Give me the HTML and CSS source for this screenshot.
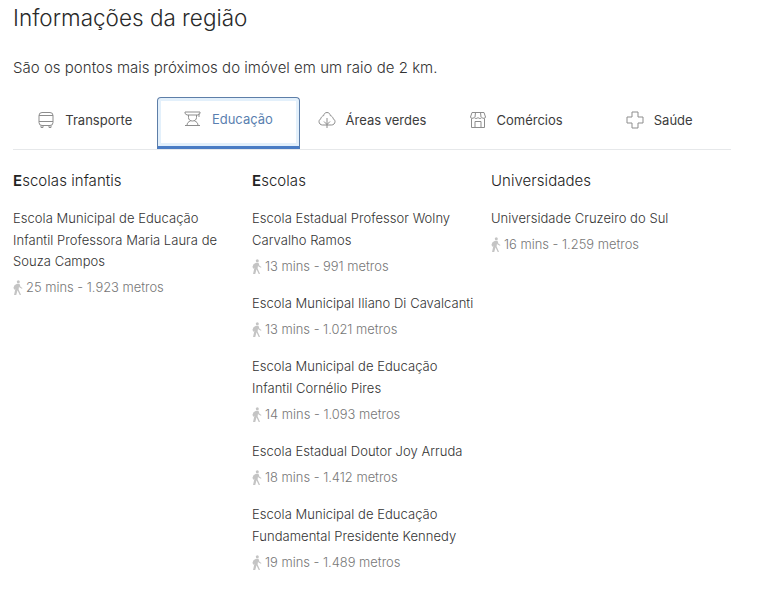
FILE: index.html
```html
<!DOCTYPE html>
<html lang="pt-BR">
<head>
<meta charset="utf-8">
<title>Informações da região</title>
<link rel="stylesheet" href="styles.css">
</head>
<body>
<main class="page">
  <h1 class="title">Informações da região</h1>
  <p class="lead">São os pontos mais próximos do imóvel em um raio de 2 km.</p>
  <nav class="tabs">
    <a class="tab"><svg class="tab-icon" viewBox="0 0 18 18"><rect x="2" y="1.500" width="14" height="13" rx="3"/><path d="M2 4.500h14M2 10.500h14M4 14.500v2h2v-2M12 14.500v2h2v-2"/></svg>Transporte</a>
    <a class="tab tab-active"><svg class="tab-icon" viewBox="0 0 18 18"><path d="M1 2h15v1.500L14 5H3L1 3.500zM4.500 5v2.500C4.500 9.800 6.300 11 8.500 11s4-1.200 4-3.500V5M15 3.500v3.500M6.500 11C4.500 11.500 3 13 3 15.500M10.500 11c2 .5 3.500 2 3.500 4.500M1 15.500h15"/></svg>Educação</a>
    <a class="tab"><svg class="tab-icon" viewBox="0 0 18 18"><path d="M9 1.500c-2 0-3.200 1.500-3.200 3C4 5 3 6.500 3 7.500 1.500 8.500 1 9.500 1 10.500c0 2 1.500 3.500 3.500 3.500h9c2 0 3.500-1.500 3.500-3.500 0-1-.5-2-2-3 0-1-1-2.500-2.800-3 0-1.500-1.200-3-3.200-3zM9 7v10M6 10.500L9 13.500M12 10.500L9 13.500"/></svg>Áreas verdes</a>
    <a class="tab"><svg class="tab-icon" viewBox="0 0 18 18"><path d="M3 1.500h12l1.500 4.500c0 1.500-2.500 1.800-3.700.5-1 1.300-2.800 1.300-3.800 0-1 1.300-2.800 1.300-3.800 0C4 7.800 1.500 7.500 1.500 6zM2.500 7.500v9h13v-9M6 16.500v-6h6v6M6.500 1.500L6 6M11.500 1.500L12 6"/></svg>Comércios</a>
    <a class="tab"><svg class="tab-icon" viewBox="0 0 18 18"><path d="M6 1h6v5h5v6h-5v5H6v-5H1V6h5z"/></svg>Saúde</a>
  </nav>
  <section class="columns">
    <div class="column">
      <h2 class="column-title"><b class="initial">E</b>scolas infantis</h2>
      <ul class="places">
        <li class="place"><span class="place-name">Escola Municipal de Educação Infantil Professora Maria Laura de Souza Campos</span><span class="place-meta"><svg class="walk" viewBox="0 0 10 15"><use href="#walk"/></svg>25 mins - 1.923 metros</span></li>
      </ul>
    </div>
    <div class="column">
      <h2 class="column-title"><b class="initial">E</b>scolas</h2>
      <ul class="places">
        <li class="place"><span class="place-name">Escola Estadual Professor Wolny Carvalho Ramos</span><span class="place-meta"><svg class="walk" viewBox="0 0 10 15"><use href="#walk"/></svg>13 mins - 991 metros</span></li>
        <li class="place"><span class="place-name">Escola Municipal Iliano Di Cavalcanti</span><span class="place-meta"><svg class="walk" viewBox="0 0 10 15"><use href="#walk"/></svg>13 mins - 1.021 metros</span></li>
        <li class="place"><span class="place-name">Escola Municipal de Educação Infantil Cornélio Pires</span><span class="place-meta"><svg class="walk" viewBox="0 0 10 15"><use href="#walk"/></svg>14 mins - 1.093 metros</span></li>
        <li class="place"><span class="place-name">Escola Estadual Doutor Joy Arruda</span><span class="place-meta"><svg class="walk" viewBox="0 0 10 15"><use href="#walk"/></svg>18 mins - 1.412 metros</span></li>
        <li class="place"><span class="place-name">Escola Municipal de Educação Fundamental Presidente Kennedy</span><span class="place-meta"><svg class="walk" viewBox="0 0 10 15"><use href="#walk"/></svg>19 mins - 1.489 metros</span></li>
      </ul>
    </div>
    <div class="column">
      <h2 class="column-title">Universidades</h2>
      <ul class="places">
        <li class="place"><span class="place-name">Universidade Cruzeiro do Sul</span><span class="place-meta"><svg class="walk" viewBox="0 0 10 15"><use href="#walk"/></svg>16 mins - 1.259 metros</span></li>
      </ul>
    </div>
  </section>
</main>
<svg class="sprites" aria-hidden="true"><defs><g id="walk"><circle cx="5.300" cy="1.700" r="1.500"/><path d="M4 3.800h2.500l1 3 2 1.200-.5.800-2.500-1.200-.5-1.200-.4 3 2.400 5.400-1.200.4-2.300-4.900-1.300 4.900H1l1.500-7-.7 1.800L.4 8l1.100-2.700z"/></g></defs></svg>
</body>
</html>
```
FILE: styles.css
```css
* { box-sizing: border-box; }
html, body { margin: 0; background: #fff; }
body { font-family: "Inter", "Liberation Sans", sans-serif; color: #3c3c3c; }
.page { width: 769px; height: 598px; padding: 4px 38px 0 13px; overflow: hidden; }
.title { margin: 0; font-size: 22.500px; line-height: 28px; font-weight: 300; color: #2a2a2a; }
.lead { margin: 26px 0 0; font-size: 15px; line-height: 20px; font-weight: 300; color: #333; letter-spacing: .02px; }
.tabs { display: grid; grid-template-columns: repeat(5, 1fr); height: 53px; margin-top: 19px; border-bottom: 1px solid #e6e8ea; }
.tab { display: flex; align-items: center; justify-content: center; gap: 10px; height: 52px; padding-bottom: 6px; font-size: 13px; font-weight: 400; color: #3c3c3c; }
.tab-icon { width: 18px; height: 18px; flex: none; fill: none; stroke: #8d8d8d; stroke-width: 1; }
.tab-active { color: #5a7fb0; border: 1.500px solid #5d7ea8; border-bottom: 3px solid #4a7cc4; border-radius: 4px 4px 0 0; box-shadow: inset 0 0 0 3px #e3f0fb; }
.columns { display: grid; grid-template-columns: repeat(3, 239px); margin-top: 20px; }
.column-title { margin: 0; font-size: 15px; line-height: 22px; font-weight: 300; color: #222; letter-spacing: .05px; }
.initial { font-weight: 600; }
.places { list-style: none; margin: 16px 0 0; padding: 0; }
.place { display: block; margin-bottom: 18.250px; padding-right: 10px; }
.place-name { display: block; font-size: 13px; line-height: 21.500px; font-weight: 300; color: #333; letter-spacing: .04px; }
.place-meta { display: flex; align-items: center; gap: 3px; margin-top: 6.500px; height: 17px; font-size: 12.900px; font-weight: 300; color: #777; }
.walk { width: 10px; height: 15px; flex: none; fill: #c4c4c4; }
.sprites { position: absolute; width: 0; height: 0; }
```
